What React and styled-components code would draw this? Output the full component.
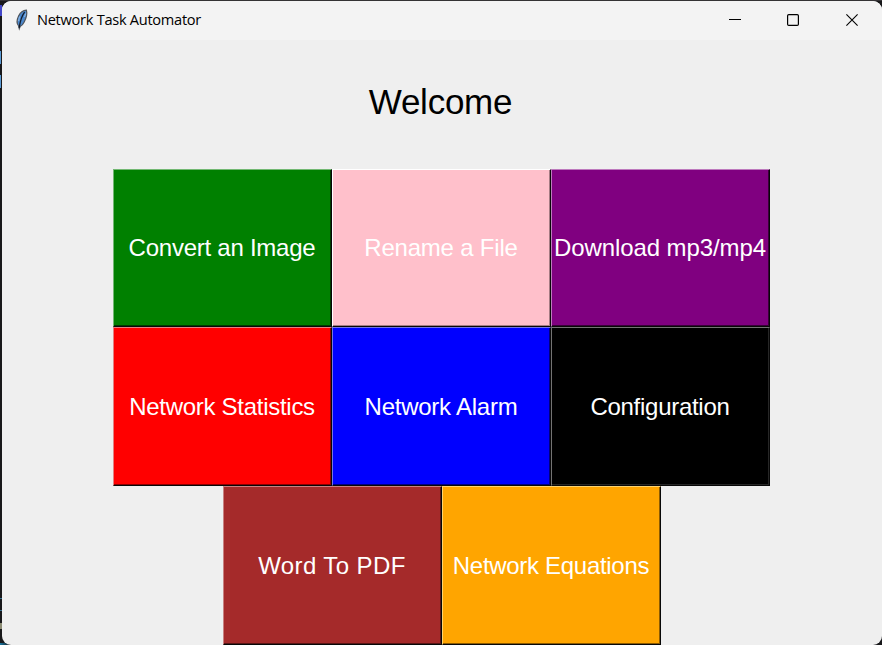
import React from 'react';
import styled, { createGlobalStyle } from 'styled-components';

const GlobalStyle = createGlobalStyle`
  * { box-sizing: border-box; }
  body { margin: 0; background: #1b1b1d; overflow: hidden; }
`;

const Desktop = styled.div`
  width: 882px;
  height: 645px;
  padding: 1px 0 0 2px;
  background:
    linear-gradient(#5b9bd5, #5b9bd5) 0 51px / 1px 13px no-repeat,
    linear-gradient(#5b9bd5, #5b9bd5) 0 75px / 1px 13px no-repeat,
    linear-gradient(#4347c8, #4347c8) 0 5px / 2px 11px no-repeat,
    linear-gradient(#38718e, #38718e) 0 598px / 2px 1px no-repeat,
    linear-gradient(#38718e, #38718e) 0 610px / 2px 1px no-repeat,
    linear-gradient(#8b8b73, #8b8b73) 0 623px / 2px 6px no-repeat,
    linear-gradient(90deg, #1675a0, #1b1b1d) 0 643px / 10px 2px no-repeat,
    linear-gradient(#343234, #343234) 0 0 / 882px 1px no-repeat,
    #18181a;
`;

const Window = styled.main`
  width: 880px;
  height: 644px;
  display: flex;
  flex-direction: column;
  overflow: hidden;
  border-radius: 9px;
  background: #efefef;
  font-family: "Liberation Sans", Arial, sans-serif;
`;

const TitleBar = styled.header`
  flex: none;
  height: 39px;
  display: flex;
  align-items: center;
  padding: 0 1px 2px 12px;
  background: #f3f3f3;
`;

const Title = styled.span`
  flex: 1;
  margin-left: 7px;
  padding-bottom: 1px;
  color: #000;
  font: 14.6px/20px "Open Sans", "Noto Sans", sans-serif;
  letter-spacing: -0.28px;
  white-space: nowrap;
`;

const Controls = styled.div`
  display: flex;
`;

const ControlButton = styled.button`
  width: 58.5px;
  height: 37px;
  padding: 0;
  display: grid;
  place-items: center;
  border: 0;
  background: none;
`;

const Heading = styled.h1`
  margin: 43px 0 0;
  padding-right: 3px;
  height: 86px;
  color: #000;
  font-size: 35px;
  font-weight: 400;
  letter-spacing: -0.25px;
  line-height: 38px;
  text-align: center;
`;

const Row = styled.div`
  flex: none;
  display: flex;
  height: ${(p) => p.$height}px;
  margin-left: ${(p) => p.$indent}px;
`;

const Tile = styled.button`
  width: 219px;
  height: 100%;
  padding: 0 1px 0 0;
  border: 1px solid;
  border-color: ${(p) => p.$light} #080808 #080808 ${(p) => p.$light};
  box-shadow: inset -1px -1px ${(p) => p.$shade};
  background: ${(p) => p.$color};
  color: #fff;
  font: 24px/28px "Liberation Sans", Arial, sans-serif;
  letter-spacing: ${(p) => p.$tracking}px;
  text-align: center;
  white-space: nowrap;
`;

const rows = [
  {
    indent: 111,
    height: 158,
    tiles: [
      { label: 'Convert an Image', color: '#008000', light: '#72b872', shade: '#003c00', tracking: -0.25 },
      { label: 'Rename a File', color: '#ffc0cb', light: '#ffffff', shade: '#a57c83', tracking: -0.2 },
      { label: 'Download mp3/mp4', color: '#800080', light: '#bd79bd', shade: '#380038', tracking: -0.08 },
    ],
  },
  {
    indent: 111,
    height: 159,
    tiles: [
      { label: 'Network Statistics', color: '#ff0000', light: '#e48080', shade: '#8b0000', tracking: -0.28 },
      { label: 'Network Alarm', color: '#0000ff', light: '#7474e4', shade: '#00007d', tracking: -0.25 },
      { label: 'Configuration', color: '#000000', light: '#737373', shade: '#262626', tracking: -0.28 },
    ],
  },
  {
    indent: 221,
    height: 159,
    tiles: [
      { label: 'Word To PDF', color: '#a52a2a', light: '#c88080', shade: '#571616', tracking: 0.4 },
      { label: 'Network Equations', color: '#ffa500', light: '#ffd36f', shade: '#8b5a00', tracking: -0.3 },
    ],
  },
];

const FeatherIcon = () => (
  <svg width="16" height="22" viewBox="0 0 16 22">
    <path d="M12.4 1.2 C13.5 5.2 12.2 9.2 10.2 13 C8.9 15.6 7.6 17 6.2 17.4 L5.3 19.8 L4.6 16.8 C2.6 14.7 2.9 10.5 4.7 6.8 C6.2 3.8 9 1.5 12.4 1.2Z" fill="#4c88cc" stroke="#50555c" strokeWidth="1.2" />
    <path d="M10.6 3.2 C7.5 7.2 6.2 12 5.2 18.8" fill="none" stroke="#111b2b" strokeWidth="1.3" />
    <path d="M5.5 7.5 L4.6 12 M11.6 4.5 L10.6 8" fill="none" stroke="#91bceb" strokeWidth="1" />
  </svg>
);

const MinimizeIcon = () => (
  <svg width="12" height="12"><path d="M0 5.5H12" stroke="#000" /></svg>
);

const MaximizeIcon = () => (
  <svg width="12" height="12"><rect x=".6" y=".6" width="10.8" height="10.8" rx="1.2" fill="none" stroke="#000" strokeWidth="1.2" /></svg>
);

const CloseIcon = () => (
  <svg width="12" height="12"><path d="M.4 .4L11.6 11.6M11.6 .4L.4 11.6" stroke="#000" strokeWidth="1.1" /></svg>
);

export default function App() {
  return (
    <Desktop>
      <GlobalStyle />
      <Window>
        <TitleBar>
          <FeatherIcon />
          <Title>Network Task Automator</Title>
          <Controls>
            <ControlButton aria-label="Minimize"><MinimizeIcon /></ControlButton>
            <ControlButton aria-label="Maximize"><MaximizeIcon /></ControlButton>
            <ControlButton aria-label="Close"><CloseIcon /></ControlButton>
          </Controls>
        </TitleBar>
        <Heading>Welcome</Heading>
        {rows.map((row, i) => (
          <Row key={i} $indent={row.indent} $height={row.height}>
            {row.tiles.map((t) => (
              <Tile key={t.label} $color={t.color} $light={t.light} $shade={t.shade} $tracking={t.tracking}>{t.label}</Tile>
            ))}
          </Row>
        ))}
      </Window>
    </Desktop>
  );
}
